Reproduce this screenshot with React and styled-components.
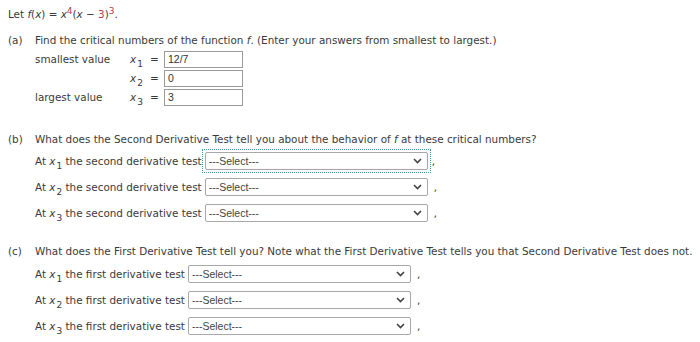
import React from "react";
import styled, { createGlobalStyle } from "styled-components";

const Global = createGlobalStyle`
  html, body { margin: 0; padding: 0; background: #fff; }
  body { font-family: "DejaVu Sans", Verdana, sans-serif; font-size: 10.4px; color: #3a3a3a; }
`;

const Page = styled.div`
  padding: 6px 8px;
  width: 700px;
  box-sizing: border-box;
`;

const Line = styled.div`
  height: 16px;
  line-height: 16px;
  white-space: nowrap;
`;

const Red = styled.span`
  color: #b5394f;
`;

const Sup = styled.sup`
  font-size: 9px;
  vertical-align: 4px;
  line-height: 0;
`;

const I = styled.i`
  font-style: italic;
`;

const Sub = styled.sub`
  font-size: 9px;
  vertical-align: -4px;
  line-height: 0;
  margin-left: 1px;
  font-style: normal;
`;

const Part = styled.section`
  margin-top: ${(p) => p.$top}px;
`;

const PartHead = styled.div`
  display: flex;
  height: 16px;
  line-height: 16px;
  white-space: nowrap;
`;

const Tag = styled.span`
  width: 27px;
  flex: none;
`;

const Body = styled.div`
  padding-left: 27px;
  margin-top: ${(p) => p.$top}px;
  display: flex;
  flex-direction: column;
  gap: ${(p) => p.$gap || 0}px;
`;

const ValueRow = styled.div`
  display: grid;
  grid-template-columns: 95px 20px 14px 79px;
  align-items: center;
  height: 18px;
`;

const Eq = styled.span`
  text-align: left;
`;

const Input = styled.div`
  height: 17px;
  box-sizing: border-box;
  border: 1px solid #9a9a9a;
  font-family: "Liberation Sans", Arial, sans-serif;
  font-size: 10.5px;
  line-height: 15px;
  padding-left: 3px;
  color: #333;
  background: #fff;
`;

const SelRow = styled.div`
  display: flex;
  align-items: center;
  height: 26px;
  white-space: nowrap;
`;

const Focus = styled.span`
  display: inline-flex;
  padding: 2px;
  border: 1px dotted ${(p) => (p.$focused ? "#4b93a6" : "transparent")};
`;

const SelectBox = styled.div`
  width: 223px;
  height: 18px;
  box-sizing: border-box;
  border: 1px solid #a8a8a8;
  border-radius: 2px;
  background: #fff;
  display: flex;
  align-items: center;
  justify-content: space-between;
  padding: 0 5px 0 3px;
  font-family: "Liberation Sans", Arial, sans-serif;
  font-size: 10.5px;
  color: #444;
`;

const Comma = styled.span`
  margin-left: ${(p) => p.$gap}px;
`;

function Chevron() {
  return (
    <svg width="9" height="6" viewBox="0 0 9 6">
      <path d="M1 1 L4.5 4.5 L8 1" fill="none" stroke="#444" strokeWidth="1.6" />
    </svg>
  );
}

function X({ n }) {
  return (
    <span>
      <I>x</I>
      <Sub>{n}</Sub>
    </span>
  );
}

function Select({ focused }) {
  return (
    <>
      <Focus $focused={focused}>
        <SelectBox>
          <span>---Select---</span>
          <Chevron />
        </SelectBox>
      </Focus>
      <Comma $gap={focused ? 1 : 3}>,</Comma>
    </>
  );
}

export default function App() {
  return (
    <Page>
      <Global />
      <Line>
        Let <I>f</I>(<I>x</I>) = <I>x</I>
        <Sup>
          <Red>4</Red>
        </Sup>
        (<I>x</I> − <Red>3</Red>)
        <Sup>
          <Red>3</Red>
        </Sup>
        .
      </Line>

      <Part $top={10}>
        <PartHead>
          <Tag>(a)</Tag>
          <span>
            Find the critical numbers of the function <I>f</I>. (Enter your answers from smallest to
            largest.)
          </span>
        </PartHead>
        <Body $top={2} $gap={1}>
          <ValueRow>
            <span>smallest value</span>
            <X n="1" />
            <Eq>=</Eq>
            <Input>12/7</Input>
          </ValueRow>
          <ValueRow>
            <span />
            <X n="2" />
            <Eq>=</Eq>
            <Input>0</Input>
          </ValueRow>
          <ValueRow>
            <span>largest value</span>
            <X n="3" />
            <Eq>=</Eq>
            <Input>3</Input>
          </ValueRow>
        </Body>
      </Part>

      <Part $top={25}>
        <PartHead>
          <Tag>(b)</Tag>
          <span>
            What does the Second Derivative Test tell you about the behavior of <I>f</I> at these
            critical numbers?
          </span>
        </PartHead>
        <Body $top={1}>
          {["1", "2", "3"].map((n, i) => (
            <SelRow key={n}>
              <span>
                At <X n={n} /> the second derivative test
              </span>
              <Select focused={i === 0} />
            </SelRow>
          ))}
        </Body>
      </Part>

      <Part $top={17}>
        <PartHead>
          <Tag>(c)</Tag>
          <span>
            What does the First Derivative Test tell you? Note what the First Derivative Test tells
            you that Second Derivative Test does not.
          </span>
        </PartHead>
        <Body $top={2}>
          {["1", "2", "3"].map((n) => (
            <SelRow key={n}>
              <span>
                At <X n={n} /> the first derivative test
              </span>
              <Select focused={false} />
            </SelRow>
          ))}
        </Body>
      </Part>
    </Page>
  );
}
